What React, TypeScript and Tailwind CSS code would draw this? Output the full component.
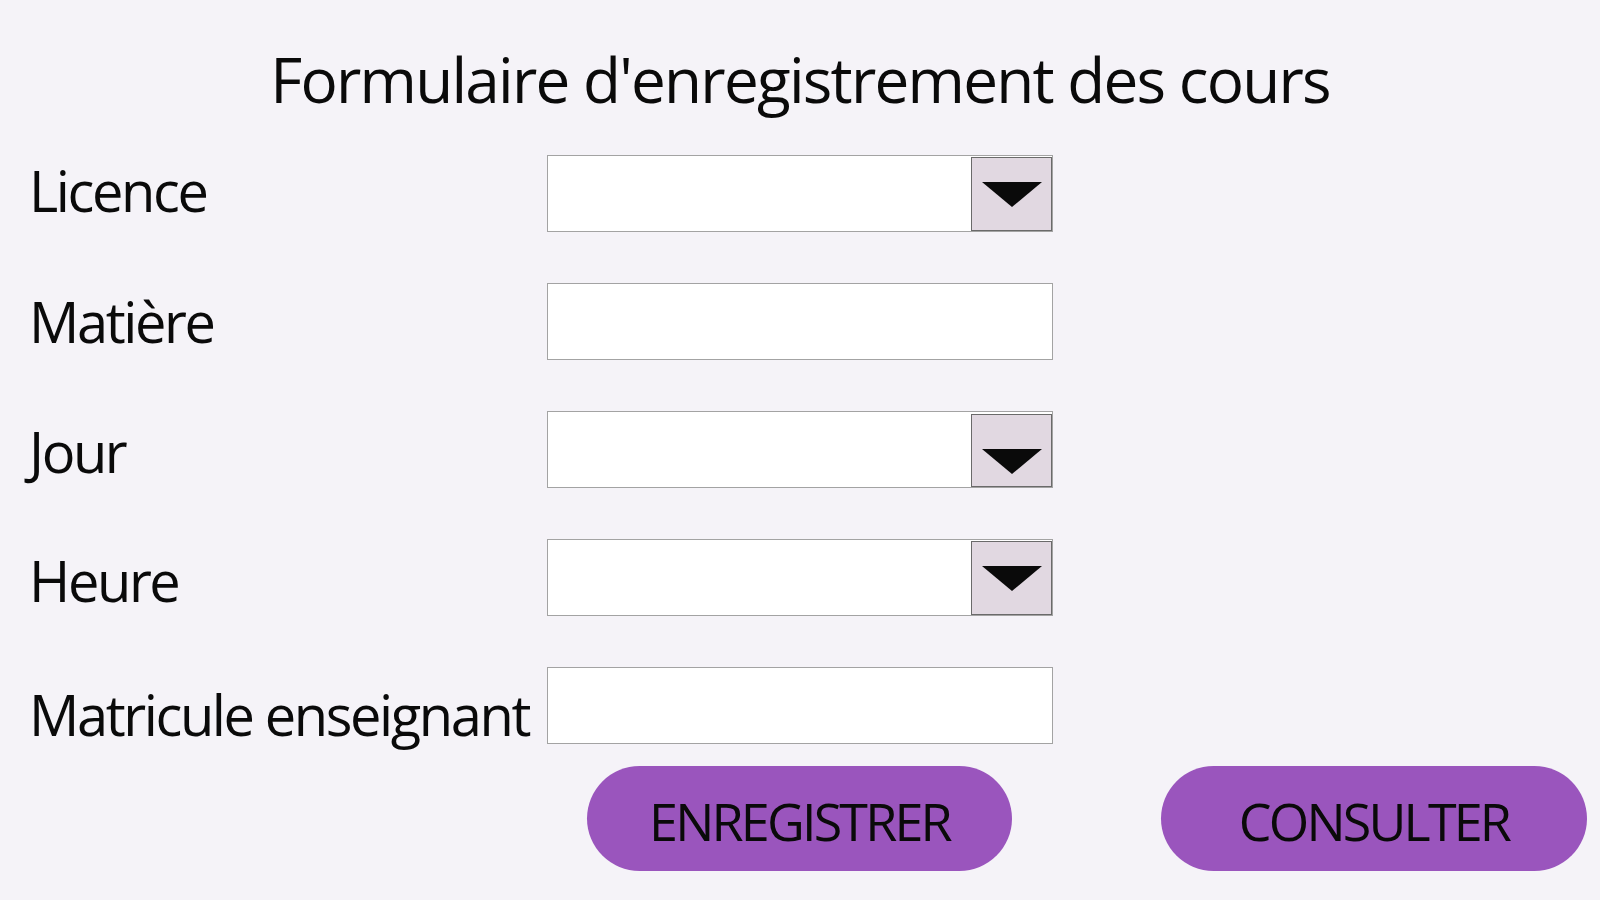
import React from 'react'

const font = { fontFamily: '"Open Sans", "Noto Sans", sans-serif' }

type Field = {
  label: string
  labelClass: string
  dropdown?: boolean
  jour?: boolean
}

const fields: Field[] = [
  { label: 'Licence', labelClass: 'mt-[7px]', dropdown: true },
  { label: 'Matière', labelClass: 'mt-[10px]' },
  { label: 'Jour', labelClass: 'mt-[12px]', dropdown: true, jour: true },
  { label: 'Heure', labelClass: 'mt-[13px]', dropdown: true },
  { label: 'Matricule enseignant', labelClass: 'mt-[19px]' },
]

function Arrow() {
  return (
    <svg width="60" height="25" viewBox="0 0 60 25">
      <polygon points="0,0 60,0 30,25" fill="#0a0a0a" />
    </svg>
  )
}

export default function App() {
  return (
    <div className="w-[1600px] h-[900px] bg-[#f5f3f8] text-[#0a0a0a] overflow-hidden" style={font}>
      <h1 className="pt-[48px] h-[155px] text-center text-[62px] leading-none font-normal tracking-[-1.75px]">
        Formulaire d'enregistrement des cours
      </h1>

      <div className="flex flex-col gap-[51px] pl-[29px]">
        {fields.map((f) => (
          <div key={f.label} className="flex items-start">
            <span className={`w-[518px] text-[56px] leading-none whitespace-nowrap tracking-[-2.4px] ${f.labelClass}`}>
              {f.label}
            </span>
            <div className="w-[506px] h-[77px] bg-white border border-[#a3a3a3] flex justify-end">
              {f.dropdown && (
                <div
                  className={
                    f.jour
                      ? 'w-[81px] h-[73px] mt-[2px] pt-[34px] bg-[#e1d8e1] border border-[#6a6a6a] flex justify-center items-start'
                      : 'w-[81px] h-[74px] mt-[1px] bg-[#e1d8e1] border border-[#6a6a6a] flex justify-center items-center'
                  }
                >
                  <Arrow />
                </div>
              )}
            </div>
          </div>
        ))}
      </div>

      <div className="flex mt-[22px] pl-[587px] gap-[149px]">
        <button className="w-[425px] h-[105px] pt-[5px] rounded-full bg-[#9a55bd] text-[52px] leading-none tracking-[-2.8px] text-[#0a0a0a]">
          ENREGISTRER
        </button>
        <button className="w-[426px] h-[105px] pt-[5px] rounded-full bg-[#9a55bd] text-[52px] leading-none tracking-[-2.8px] text-[#0a0a0a]">
          CONSULTER
        </button>
      </div>
    </div>
  )
}
